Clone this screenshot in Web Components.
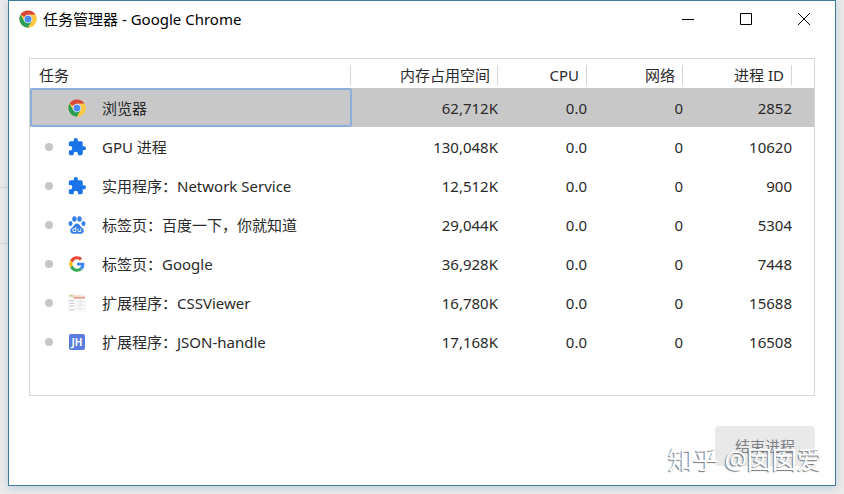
<!DOCTYPE html>
<html lang="zh-CN">
<head>
<meta charset="utf-8">
<title>任务管理器 - Google Chrome</title>
<style>
    body {
        margin: 0;
        background: #eceaea;
        color: #2a2a2a;
        font: 15px/20px "Noto Sans", "Noto Sans CJK SC", sans-serif;
    }
</style>
</head>
<body>
<desktop-backdrop>
    <app-window heading="任务管理器 - Google Chrome">
        <task-table></task-table>
        <action-button slot="actions">结束进程</action-button>
    </app-window>
    <water-mark slot="mark">知乎 @囡囡爱</water-mark>
</desktop-backdrop>

<script>
const ICONS = {
    chrome: `<svg viewBox="0 0 48 48">
        <circle cx="24" cy="24" r="23" fill="#fbc943"/>
        <path d="M24 24 4.100 12.500A23 23 0 0 1 43.900 12.500H24Z" fill="#d9483b"/>
        <path d="M4.100 12.500A23 23 0 0 0 24 47L34 29.700 24 24 14 29.700Z" fill="#2c9f56"/>
        <path d="M24 12.500H43.900A23 23 0 0 1 24 47L34 29.700A11.500 11.500 0 0 0 24 12.500Z" fill="#fbc943"/>
        <circle cx="24" cy="24" r="11.500" fill="#dfe6f2"/>
        <circle cx="24" cy="24" r="9" fill="#4c8bf5"/>
    </svg>`,
    puzzle: `<svg viewBox="1 1 22 22"><path fill="#1a73e8" d="M20.500 11H19V7c0-1.100-.9-2-2-2h-4V3.500a2.500 2.500 0 0 0-5 0V5H4c-1.100 0-2 .9-2 2v3.800h1.500a2.700 2.700 0 0 1 0 5.400H2V20c0 1.100.9 2 2 2h3.800v-1.500a2.700 2.700 0 0 1 5.400 0V22H17c1.100 0 2-.9 2-2v-4h1.500a2.500 2.500 0 0 0 0-5z"/></svg>`,
    paw: `<svg viewBox="0 0 18 18" fill="#3580e8">
        <ellipse cx="2.500" cy="7.500" rx="2" ry="2.600"/>
        <ellipse cx="6.400" cy="3" rx="2.200" ry="2.800"/>
        <ellipse cx="11.500" cy="3" rx="2.200" ry="2.800"/>
        <ellipse cx="15.500" cy="7.500" rx="2" ry="2.600"/>
        <path d="M9 7.500c2 0 2.600 1.800 4 3.200 1.500 1.400 3 2.500 2.800 4.400-.2 1.800-1.500 2.700-3.200 2.700-1.300 0-2.300-.3-3.600-.3s-2.300.3-3.600.3c-1.700 0-3-.9-3.200-2.700-.2-1.900 1.300-3 2.800-4.400C6.400 9.300 7 7.500 9 7.500Z"/>
        <path d="M7.700 11v4.500H6a1.400 1.400 0 0 1 0-2.800h1.700M10 12.500v2.200q0 .8.800.8h2v-3" fill="none" stroke="#e6effc"/>
    </svg>`,
    google: `<svg viewBox="-4 -4 56 56">
        <path fill="#ea4335" d="M24 9.500c3.540 0 6.710 1.220 9.210 3.600l6.850-6.850C35.900 2.380 30.470 0 24 0 14.620 0 6.510 5.380 2.560 13.220l7.980 6.190C12.430 13.720 17.740 9.500 24 9.500z"/>
        <path fill="#4285f4" d="M46.980 24.550c0-1.570-.15-3.090-.38-4.550H24v9.020h12.940c-.58 2.960-2.260 5.480-4.780 7.180l7.730 6c4.510-4.180 7.090-10.360 7.090-17.650z"/>
        <path fill="#fbbc05" d="M10.530 28.590a14.500 14.500 0 0 1 0-9.180l-7.980-6.190a24 24 0 0 0 0 21.560l7.980-6.190z"/>
        <path fill="#34a853" d="M24 48c6.480 0 11.930-2.130 15.890-5.810l-7.730-6c-2.150 1.450-4.920 2.300-8.160 2.300-6.260 0-11.570-4.220-13.470-9.910l-7.980 6.190C6.510 42.620 14.620 48 24 48z"/>
    </svg>`,
    sheet: `<svg viewBox="0 0 20 20">
        <path fill="#faf9f9" d="M0 0h20v20H0z"/>
        <path fill="#b9d79c" d="M1 1h5v2H1z"/>
        <path fill="#e79a83" d="M6 3h13v2H6z"/>
        <path fill="#f8d9ce" d="M6 1h9v1H6z"/>
        <path stroke="#c3c5c9" d="M1 7.500h6M2 10.500h5M1 13.500h6M2 17.500h5"/>
        <path stroke="#e4e4e4" d="M9 8.500h9M9 12.500h9M9 16.500h9M13.500 6v12" fill="none"/>
    </svg>`,
    json: `<svg viewBox="-1 -1 18 18">
        <rect width="16" height="16" rx="2" fill="#5a7be0"/>
        <text x="8" y="12" text-anchor="middle" font-family="Open Sans" font-size="10" font-weight="700" fill="#fff">JH</text>
    </svg>`
}

const TASKS = [
    {icon: 'chrome', name: '浏览器', memory: '62,712K', cpu: '0.0', network: '0', pid: '2852', selected: true},
    {icon: 'puzzle', name: 'GPU 进程', memory: '130,048K', cpu: '0.0', network: '0', pid: '10620'},
    {icon: 'puzzle', name: '实用程序：Network Service', memory: '12,512K', cpu: '0.0', network: '0', pid: '900'},
    {icon: 'paw', name: '标签页：百度一下，你就知道', memory: '29,044K', cpu: '0.0', network: '0', pid: '5304'},
    {icon: 'google', name: '标签页：Google', memory: '36,928K', cpu: '0.0', network: '0', pid: '7448'},
    {icon: 'sheet', name: '扩展程序：CSSViewer', memory: '16,780K', cpu: '0.0', network: '0', pid: '15688'},
    {icon: 'json', name: '扩展程序：JSON-handle', memory: '17,168K', cpu: '0.0', network: '0', pid: '16508'}
]

/** Page behind the window */
class DesktopBackdrop extends HTMLElement {
    constructor() {
        super()
        this.attachShadow({mode: 'open'}).innerHTML = `<style>
            :host {
                display: grid;
                box-sizing: border-box;
                position: relative;
                min-height: 100vh;
                padding: 0 8px 8px;
                overflow: hidden;
            }
            .rule {
                position: absolute;
                left: 0;
                top: 187px;
                width: 8px;
                height: 55px;
                border: solid #d2d2d2;
                border-width: 1px 0;
            }
        </style>
        <div class="rule"></div>
        <slot></slot>
        <slot name="mark"></slot>`
    }
}

/** Window frame with caption buttons */
class AppWindow extends HTMLElement {
    constructor() {
        super()
        this.attachShadow({mode: 'open'}).innerHTML = `<style>
            :host {
                display: flex;
                flex-direction: column;
                position: relative;
                border: 1px solid #3f7f9b;
                background: #fff;
                box-shadow: 0 2px 8px #6f9fc066;
            }
            header {
                display: flex;
                align-items: center;
                height: 36px;
                padding: 0 2px 0 10px;
                color: #000;
            }
            header svg {
                width: 18px;
                height: 18px;
            }
            h1 {
                flex: 1;
                margin: 0 0 0 6px;
                font: inherit;
            }
            button {
                width: 58px;
                height: 36px;
                padding: 0;
                border: 0;
                background: none;
            }
            button svg {
                display: block;
                width: 14px;
                height: 14px;
                margin: auto;
                fill: none;
                stroke: #000;
            }
            main {
                flex: 1;
                display: flex;
                flex-direction: column;
                padding: 21px 20px 20px;
            }
            footer {
                display: flex;
                justify-content: flex-end;
                padding: 10px 20px 19px;
            }
        </style>
        <header>
            ${ICONS.chrome}
            <h1>${this.getAttribute('heading')}</h1>
            <button aria-label="最小化"><svg viewBox="0 0 14 14"><path d="M1 7.500h12"/></svg></button>
            <button aria-label="最大化"><svg viewBox="0 0 14 14"><path d="M1.500 1.500h11v11h-11z"/></svg></button>
            <button aria-label="关闭"><svg viewBox="0 0 14 14"><path d="m1 1 12 12M13 1 1 13"/></svg></button>
        </header>
        <main><slot></slot></main>
        <footer><slot name="actions"></slot></footer>`
    }
}

class TaskTable extends HTMLElement {
    constructor() {
        super()
        this.attachShadow({mode: 'open'}).innerHTML = `<style>
            :host {
                display: block;
                flex: 1;
                border: 1px solid #d6d6d6;
            }
            table {
                width: 100%;
                table-layout: fixed;
                border-collapse: collapse;
            }
            th, td {
                padding: 0;
                font-weight: 400;
                text-align: right;
                white-space: nowrap;
            }
            th {
                height: 27px;
                padding-top: 2px;
            }
            th span {
                display: block;
                padding: 0 7px 0 9px;
                border-right: 1px solid #d6d6d6;
            }
            th:first-child, td:first-child {
                text-align: left;
            }
            tbody td {
                height: 39px;
            }
            .memory { width: 147px; }
            .cpu { width: 89px; }
            .network { width: 96px; }
            .pid { width: 109px; }
            .tail { width: 22px; }
            .task {
                display: flex;
                align-items: center;
                box-sizing: border-box;
                height: 39px;
                padding-left: 15px;
            }
            .dot {
                width: 8px;
                height: 8px;
                border-radius: 50%;
                background: #c6c6c6;
            }
            .icon {
                width: 18px;
                height: 18px;
                margin: 0 16px 0 15px;
            }
            .icon svg {
                display: block;
                width: 100%;
                height: 100%;
            }
            .selected {
                background: #c8c8c8;
            }
            .selected .task {
                margin-right: -1px;
                border-radius: 3px;
                box-shadow: inset 0 0 0 2px #8caedb;
            }
            .selected .dot {
                visibility: hidden;
            }
        </style>
        <table>
            <thead>
                <tr>
                    <th scope="col"><span>任务</span></th>
                    <th scope="col" class="memory"><span>内存占用空间</span></th>
                    <th scope="col" class="cpu"><span>CPU</span></th>
                    <th scope="col" class="network"><span>网络</span></th>
                    <th scope="col" class="pid"><span>进程 ID</span></th>
                    <td class="tail"></td>
                </tr>
            </thead>
            <tbody>${TASKS.map(task => this.buildRow(task)).join('')}</tbody>
        </table>`
    }

    buildRow(task) {
        return `<tr class="${task.selected ? 'selected' : ''}">
            <td><div class="task"><span class="dot"></span><span class="icon">${ICONS[task.icon]}</span>${task.name}</div></td>
            <td>${task.memory}</td>
            <td>${task.cpu}</td>
            <td>${task.network}</td>
            <td>${task.pid}</td>
            <td></td>
        </tr>`
    }
}

class ActionButton extends HTMLElement {
    constructor() {
        super()
        this.attachShadow({mode: 'open'}).innerHTML = `<style>
            :host {
                display: block;
            }
            button {
                height: 40px;
                padding: 0 20px;
                border: 0;
                border-radius: 4px;
                background: #e9e9e9;
                color: #7d8084;
                font: inherit;
            }
        </style>
        <button disabled><slot></slot></button>`
    }
}

class WaterMark extends HTMLElement {
    constructor() {
        super()
        this.attachShadow({mode: 'open'}).innerHTML = `<style>
            :host {
                position: absolute;
                right: 22px;
                bottom: 20px;
                color: #fff;
                font-size: 25px;
                line-height: 30px;
                white-space: nowrap;
                text-shadow: -1px 1px 1px #777;
                pointer-events: none;
            }
        </style>
        <slot></slot>`
    }
}

customElements.define('desktop-backdrop', DesktopBackdrop)
customElements.define('app-window', AppWindow)
customElements.define('task-table', TaskTable)
customElements.define('action-button', ActionButton)
customElements.define('water-mark', WaterMark)
</script>
</body>
</html>
